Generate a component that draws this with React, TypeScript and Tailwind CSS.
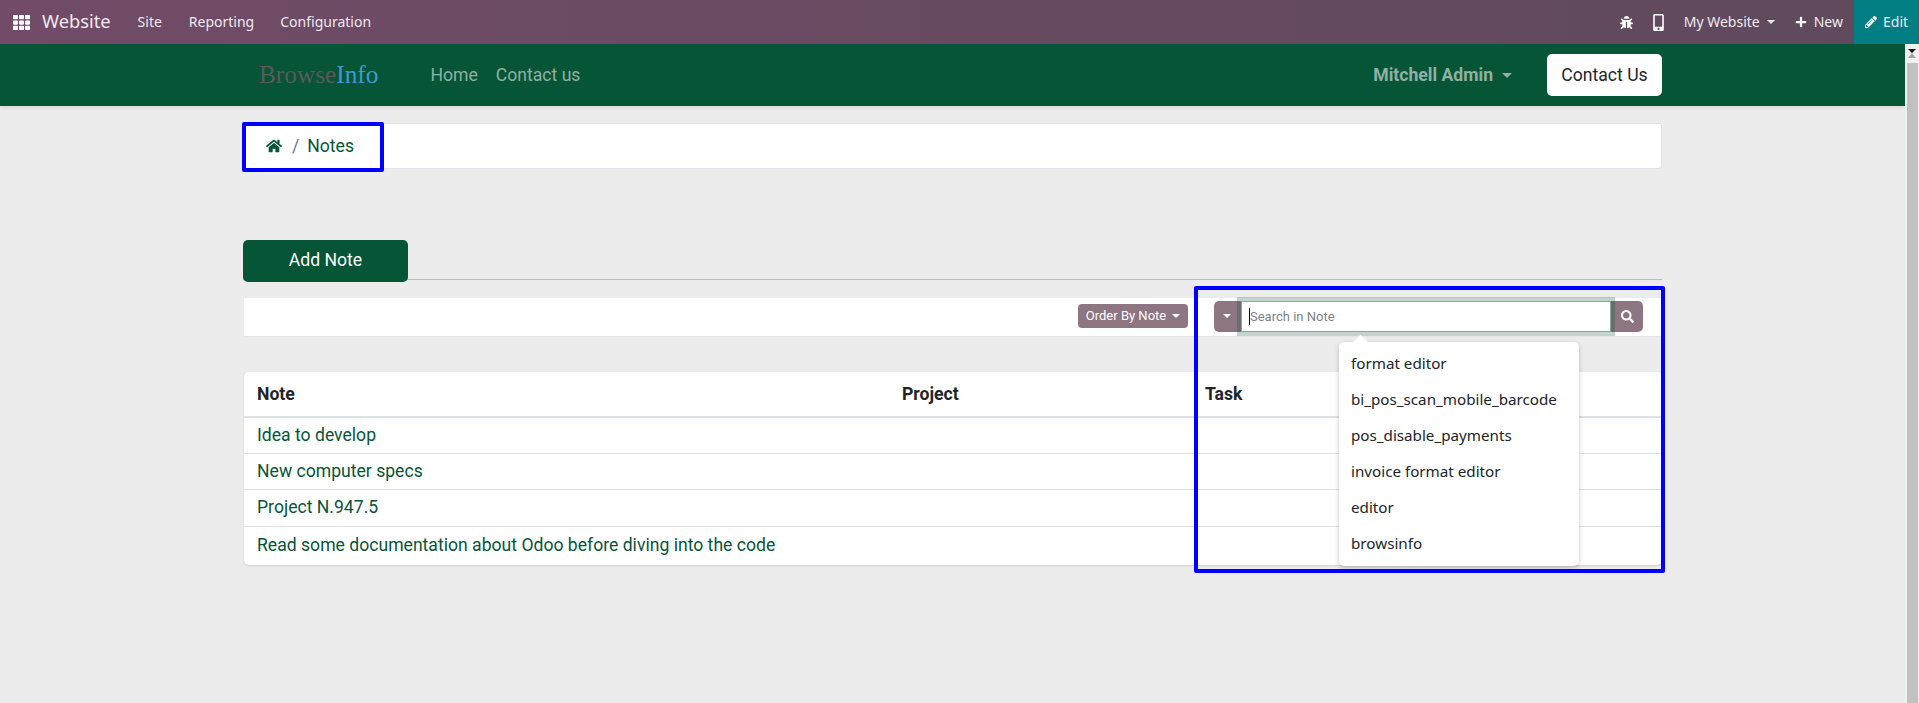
import React from 'react';
import { FaTh, FaBug, FaMobileAlt, FaPlus, FaPencilAlt, FaHome, FaSearch } from 'react-icons/fa';

const notes = [
  'Idea to develop',
  'New computer specs',
  'Project N.947.5',
  'Read some documentation about Odoo before diving into the code',
];

const suggestions = [
  'format editor',
  'bi_pos_scan_mobile_barcode',
  'pos_disable_payments',
  'invoice format editor',
  'editor',
  'browsinfo',
];

const rowClasses = [
  'h-[36px]',
  'h-[36px] border-t border-[#dee2e6]',
  'h-[37px] border-t border-[#dee2e6]',
  'h-[39px] border-t border-[#dee2e6]',
];

function Caret({ className }: { className: string }) {
  return <span className={`inline-block w-0 h-0 border-x-[4px] border-x-transparent border-t-[4px] ${className}`} />;
}

function TopBar() {
  return (
    <div className="h-11 flex items-center bg-gradient-to-r from-[#714b67] to-[#5f4a5c] text-[#f0e9ee] font-['Noto_Sans',sans-serif] text-[14px]">
      <FaTh className="ml-[13px] text-white text-[17px]" />
      <span className="ml-[12px] pb-[2px] text-[18.3px]">Website</span>
      <span className="ml-[27px] pb-[2px]">Site</span>
      <span className="ml-[27px] pb-[2px]">Reporting</span>
      <span className="ml-[26px] pb-[2px]">Configuration</span>
      <div className="ml-auto flex items-center h-full">
        <FaBug className="text-white text-[13px]" />
        <FaMobileAlt className="ml-[17px] text-white text-[17px]" />
        <span className="ml-[17px] pb-[2px]">My Website</span>
        <Caret className="ml-[7px] border-t-white" />
        <FaPlus className="ml-[20px] text-white text-[12px]" />
        <span className="ml-[7px] pb-[2px]">New</span>
        <div className="ml-[11px] w-[65px] h-full bg-[#017e84] flex items-center pl-[11px] gap-[6px]">
          <FaPencilAlt className="text-white text-[12px]" />
          <span className="pb-[2px]">Edit</span>
        </div>
      </div>
    </div>
  );
}

function SiteHeader() {
  return (
    <div className="h-[62px] bg-[#075537] shadow-[0_2px_4px_rgba(0,0,0,0.08)]">
      <div className="w-[1419px] mx-auto h-full flex items-center">
        <span className="ml-[16px] font-['Liberation_Serif',serif] text-[25.3px] leading-none text-[#5a5a5a]">
          Browse<span className="text-[#3d9ad6]">Info</span>
        </span>
        <span className="ml-[52px] text-[#8fb0a2]">Home</span>
        <span className="ml-[18px] text-[#8fb0a2]">Contact us</span>
        <span className="ml-auto font-bold text-[#8fb0a2]">Mitchell Admin</span>
        <span className="ml-[9px] inline-block w-0 h-0 border-x-[5px] border-x-transparent border-t-[5px] border-t-[#8fb0a2]" />
        <button className="ml-[35px] w-[115px] h-[42px] bg-white rounded-[5px] text-[#212529]">Contact Us</button>
      </div>
    </div>
  );
}

function SearchBox() {
  return (
    <div className="relative ml-[26px] flex h-[31px]">
      <button className="w-[27px] bg-[#8e7582] rounded-l-[5px] flex items-center justify-center pr-[2px]">
        <Caret className="border-t-white" />
      </button>
      <div className="relative w-[370px] z-10 shadow-[0_0_0_4px_rgba(7,85,55,0.25)]">
        <input
          readOnly
          placeholder="Search in Note"
          className="w-full h-full bg-white border border-[#83aa9b] pl-[8px] text-[13px] outline-none placeholder:text-[#7b838a]"
        />
        <span className="absolute left-[8px] top-[7px] w-px h-[17px] bg-black" />
      </div>
      <button className="w-[32px] bg-[#8e7582] rounded-r-[5px] flex items-center justify-center">
        <FaSearch className="text-white text-[13px]" />
      </button>

      <div className="absolute z-20 left-[125px] top-[41px] w-[240px] h-[224px] bg-white rounded-[5px] shadow-[0_2px_5px_rgba(0,0,0,0.22)] py-[4px] font-['Noto_Sans',sans-serif] text-[15.2px] text-[#212529]">
        <div className="absolute -top-[5px] left-[16px] w-[11px] h-[11px] rotate-45 bg-white" />
        {suggestions.map((s) => (
          <div key={s} className="relative h-[36px] pl-[12px] flex items-center">
            {s}
          </div>
        ))}
      </div>
    </div>
  );
}

function NotesTable() {
  return (
    <div className="ml-px mt-[35px] bg-white rounded-[5px] shadow-[0_1px_2px_rgba(0,0,0,0.12)] overflow-hidden">
      <table className="w-full table-fixed text-left">
        <thead>
          <tr className="h-[45px] border-b-2 border-[#dee2e6] text-[#212529]">
            <th className="w-[644px] pl-[13px] font-bold">Note</th>
            <th className="w-[303px] font-bold pl-[14px]">Project</th>
            <th className="font-bold pl-[14px]">Task</th>
          </tr>
        </thead>
        <tbody>
          {notes.map((n, i) => (
            <tr key={n} className={rowClasses[i]}>
              <td className={i === 3 ? 'pl-[13px] pb-[2px] text-[#075537]' : 'pl-[13px] text-[#075537]'}>{n}</td>
              <td />
              <td />
            </tr>
          ))}
        </tbody>
      </table>
    </div>
  );
}

export default function App() {
  return (
    <div className="relative h-[703px] overflow-hidden bg-[#ececec] font-['Roboto',sans-serif] text-[17.6px]">
      <TopBar />
      <div className="flex h-[659px]">
        <div className="flex-1 min-w-0">
          <SiteHeader />
          <div className="w-[1419px] mx-auto">
            <div className="mt-[17px] h-[46px] bg-white border border-[#dfe2e6] rounded-[3px] flex items-center pl-[22px]">
              <FaHome className="text-[#075537] text-[16px]" />
              <span className="ml-[10px] text-[#6c757d]">/</span>
              <span className="ml-[8px] text-[#075537]">Notes</span>
            </div>

            <div className="mt-[71px] h-[40px] border-b border-[#bdbdbd]">
              <button className="relative w-[165px] h-[42px] pb-[2px] bg-[#075537] rounded-[5px] text-white">Add Note</button>
            </div>

            <div className="ml-px mt-[18px] h-[39px] pb-[2px] bg-white border-b border-[#e4e6ea] flex items-center pl-[834px]">
              <button className="w-[110px] h-[24px] bg-[#8e7582] rounded-[4px] text-white text-[13px] flex items-center justify-center gap-[6px]">
                Order By Note
                <Caret className="border-t-white" />
              </button>
              <SearchBox />
            </div>

            <NotesTable />
          </div>
        </div>
        <div className="w-[14px] bg-[#f1f1f1] flex flex-col items-center pt-[5px]">
          <Caret className="border-t-0 border-b-[5px] border-b-[#a3a3a3]" />
          <div className="mt-[5px] flex-1 w-[11px] bg-[#c1c1c1]" />
        </div>
      </div>

      {/* blue markup boxes drawn over the screenshot */}
      <div className="absolute left-[242px] top-[122px] w-[142px] h-[50px] border-[4px] border-[#0000ff] rounded-[2px]" />
      <div className="absolute z-30 left-[1194px] top-[286px] w-[471px] h-[287px] border-[4px] border-[#0000ff] rounded-[2px]" />
    </div>
  );
}
